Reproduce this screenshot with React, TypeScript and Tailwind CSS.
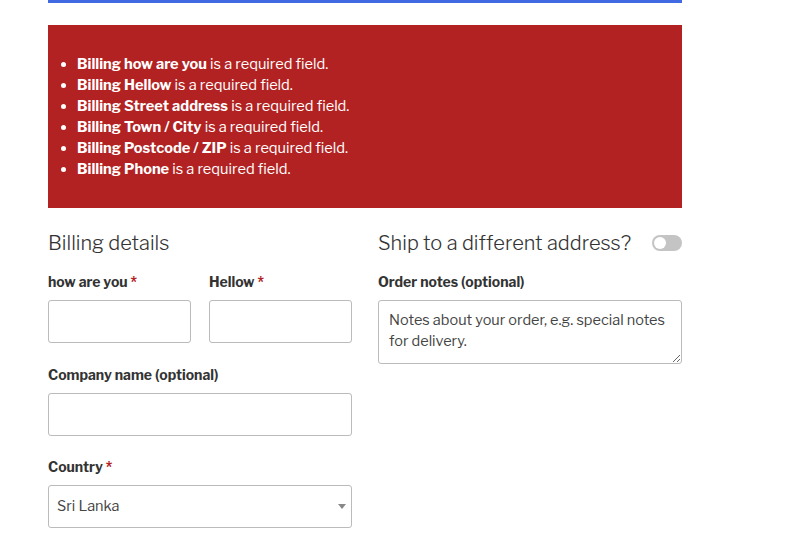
const errors = ["how are you", "Hellow", "Street address", "Town / City", "Postcode / ZIP", "Phone"];

function Label({ text, required }: { text: string; required?: boolean }) {
  return (
    <label className="block h-[18px] text-[14px] leading-[18px] font-bold text-[#333]">
      {text}
      {required && <span className="text-[#b22222]"> *</span>}
    </label>
  );
}

export default function App() {
  return (
    <div className="w-[786px] h-[536px] bg-white overflow-hidden font-['Libre_Franklin','Inter','Liberation_Sans',sans-serif] text-[#333]">
      <div className="ml-[48px] w-[634px]">
        {/* top bar */}
        <div className="h-[3px] bg-[#4169e1]" />

        {/* error notice */}
        <div className="mt-[22px] h-[183px] bg-[#b22222] pt-[29px]">
          <ul className="list-disc pl-[29px] text-white text-[14.6px] leading-[21px]">
            {errors.map((e) => (
              <li key={e}>
                <strong className="font-bold">Billing {e}</strong> is a required field.
              </li>
            ))}
          </ul>
        </div>

        {/* form */}
        <div className="mt-[22px] flex gap-[26px]">
          <div className="w-[304px]">
            <h3 className="h-[26px] text-[20px] leading-[26px] font-light">Billing details</h3>
            <div className="mt-[17px] flex gap-[18px]">
              <div className="w-[143px]">
                <Label text="how are you" required />
                <input className="mt-[9px] block w-full h-[43px] rounded-[3px] border border-[#bbb]" />
              </div>
              <div className="w-[143px]">
                <Label text="Hellow" required />
                <input className="mt-[9px] block w-full h-[43px] rounded-[3px] border border-[#bbb]" />
              </div>
            </div>
            <div className="mt-[23px]">
              <Label text="Company name (optional)" />
              <input className="mt-[9px] block w-full h-[43px] rounded-[3px] border border-[#bbb]" />
            </div>
            <div className="mt-[22px]">
              <Label text="Country" required />
              <div className="mt-[9px] flex items-center justify-between h-[43px] rounded-[3px] border border-[#bbb] pl-[8px] pr-[5px]">
                <span className="text-[14.5px] text-[#444]">Sri Lanka</span>
                <svg width="8" height="5" viewBox="0 0 8 5">
                  <path d="M0 0h8L4 5z" fill="#888" />
                </svg>
              </div>
            </div>
          </div>

          <div className="w-[304px]">
            <div className="flex items-center justify-between h-[26px]">
              <h3 className="text-[20px] leading-[26px] font-light">Ship to a different address?</h3>
              <div className="w-[30px] h-[16px] rounded-full bg-[#c4c4c4] flex items-center pl-[2px]">
                <div className="w-[12px] h-[12px] rounded-full bg-white" />
              </div>
            </div>
            <div className="mt-[17px]">
              <Label text="Order notes (optional)" />
              <textarea
                className="mt-[9px] block w-full h-[64px] rounded-[3px] border border-[#bbb] px-[10px] pt-[9px] text-[14.5px] leading-[21px] text-[#444] placeholder:text-[#444] resize-y"
                placeholder="Notes about your order, e.g. special notes for delivery."
              />
            </div>
          </div>
        </div>
      </div>
    </div>
  );
}
